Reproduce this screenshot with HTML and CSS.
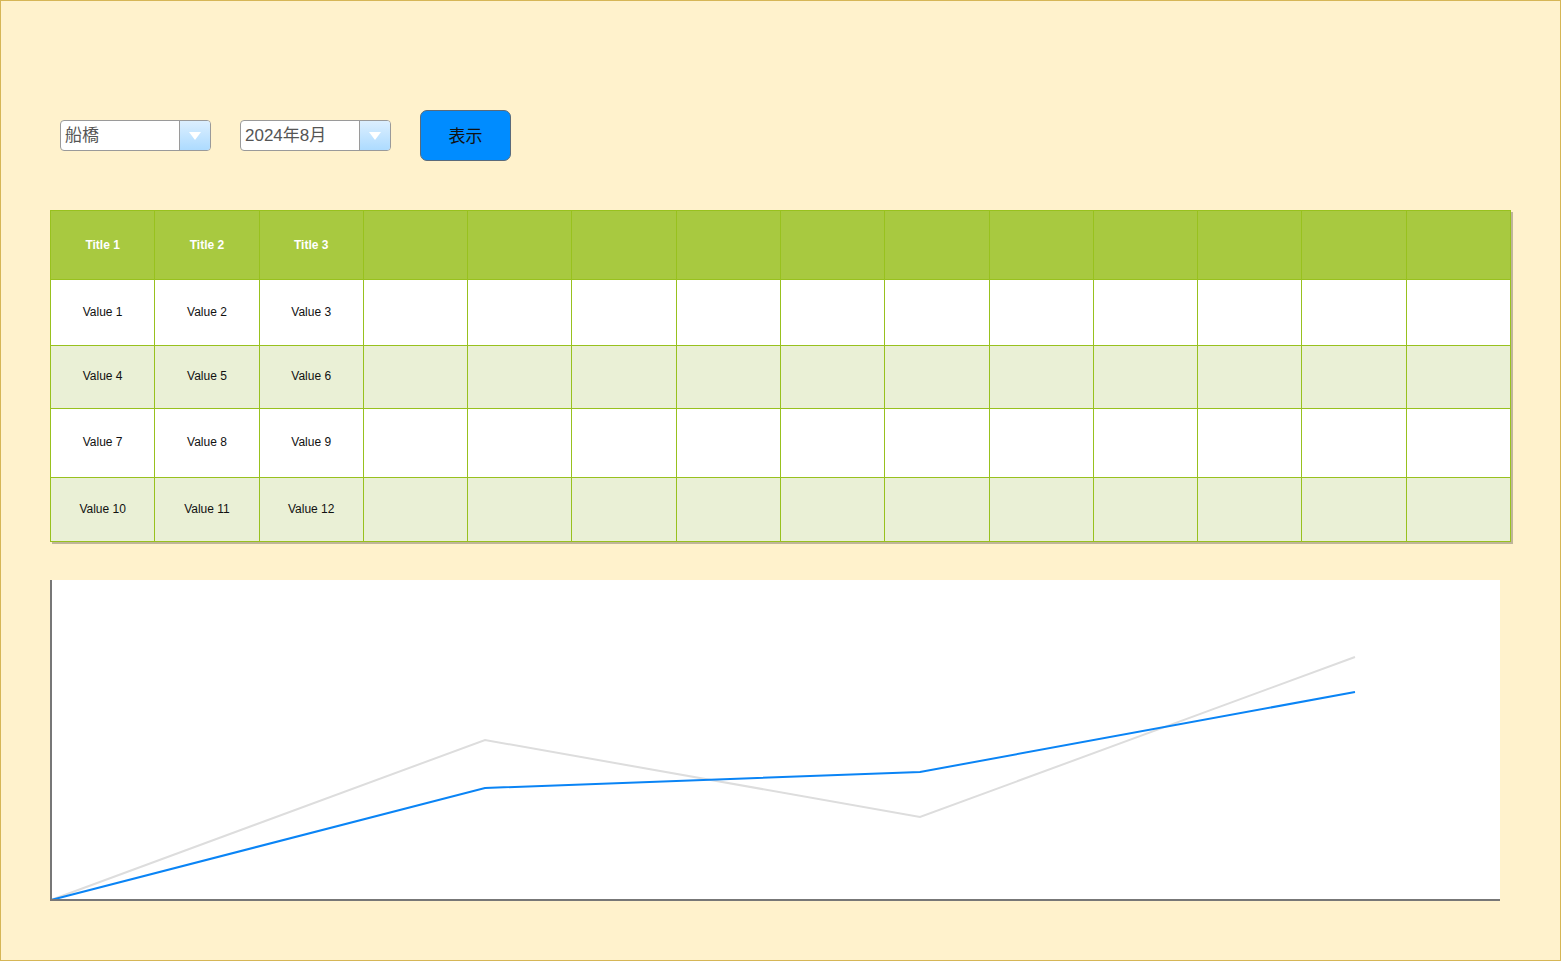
FILE: index.html
```html
<!DOCTYPE html>
<html lang="ja">
<head>
<meta charset="utf-8">
<link rel="stylesheet" href="styles.css">
</head>
<body>
<div class="frame">
  <div class="toolbar">
    <div class="select">
      <span class="select-text">船橋</span>
      <span class="select-btn"><svg width="14" height="10" viewBox="0 0 14 10"><path d="M1 1 L13 1 L7 9 Z" fill="#fff"/></svg></span>
    </div>
    <div class="select">
      <span class="select-text">2024年8月</span>
      <span class="select-btn"><svg width="14" height="10" viewBox="0 0 14 10"><path d="M1 1 L13 1 L7 9 Z" fill="#fff"/></svg></span>
    </div>
    <button class="show-btn">表示</button>
  </div>

  <table class="grid">
    <colgroup>
      <col><col><col><col><col><col><col><col><col><col><col><col><col><col>
    </colgroup>
    <tr class="head h0">
      <th>Title 1</th><th>Title 2</th><th>Title 3</th><th></th><th></th><th></th><th></th><th></th><th></th><th></th><th></th><th></th><th></th><th></th>
    </tr>
    <tr class="r1">
      <td>Value 1</td><td>Value 2</td><td>Value 3</td><td></td><td></td><td></td><td></td><td></td><td></td><td></td><td></td><td></td><td></td><td></td>
    </tr>
    <tr class="r2 alt">
      <td>Value 4</td><td>Value 5</td><td>Value 6</td><td></td><td></td><td></td><td></td><td></td><td></td><td></td><td></td><td></td><td></td><td></td>
    </tr>
    <tr class="r3">
      <td>Value 7</td><td>Value 8</td><td>Value 9</td><td></td><td></td><td></td><td></td><td></td><td></td><td></td><td></td><td></td><td></td><td></td>
    </tr>
    <tr class="r4 alt">
      <td>Value 10</td><td>Value 11</td><td>Value 12</td><td></td><td></td><td></td><td></td><td></td><td></td><td></td><td></td><td></td><td></td><td></td>
    </tr>
  </table>

  <div class="chart">
    <svg width="1450" height="321" viewBox="0 0 1450 321">
      <polyline points="1,320 435,160 870,237 1305,77" fill="none" stroke="#dddddd" stroke-width="2"/>
      <polyline points="1,320 435,208 870,192 1305,112" fill="none" stroke="#0a84f5" stroke-width="2"/>
      <line x1="1" y1="0" x2="1" y2="321" stroke="#777" stroke-width="2"/>
      <line x1="0" y1="320" x2="1450" y2="320" stroke="#777" stroke-width="2"/>
    </svg>
  </div>
</div>
</body>
</html>
```
FILE: styles.css
```css
html, body {
  margin: 0;
  padding: 0;
}
body {
  font-family: "Liberation Sans", "Noto Sans CJK JP", sans-serif;
}
.frame {
  box-sizing: border-box;
  width: 1561px;
  height: 961px;
  background: #fff2cc;
  border: 1px solid #d6b656;
  padding: 109px 0 0 49px;
  display: flex;
  flex-direction: column;
  align-items: flex-start;
}
.toolbar {
  display: flex;
  align-items: center;
  height: 51px;
  padding-left: 10px;
  gap: 30px;
}
.select {
  box-sizing: border-box;
  width: 151px;
  height: 31px;
  background: #fff;
  border: 1px solid #9a9a9a;
  border-radius: 4px;
  display: flex;
  overflow: hidden;
  margin-right: -1px;
}
.select-text {
  flex: 1;
  font-family: "Liberation Sans", "Noto Sans CJK JP", sans-serif;
  font-size: 17px;
  color: #555;
  line-height: 30px;
  padding-left: 4px;
}
.select-btn {
  width: 30px;
  border-left: 1px solid #9a9a9a;
  background: linear-gradient(#dcefff, #addbff);
  display: flex;
  align-items: center;
  justify-content: center;
}
.show-btn {
  box-sizing: border-box;
  width: 91px;
  height: 51px;
  margin-left: 0;
  background: #008cff;
  border: 1px solid #5a6a7a;
  border-radius: 7px;
  font-family: "Noto Sans CJK JP", sans-serif;
  font-size: 17px;
  color: #111;
  padding: 0 0 3px 0;
}
.grid {
  margin-top: 49px;
  width: 1461px;
  border-collapse: collapse;
  table-layout: fixed;
  box-shadow: 2px 2px 0 rgba(0, 0, 0, 0.25);
  font-size: 12px;
}
.grid th, .grid td {
  border: 1px solid #98c11e;
  text-align: center;
  padding: 0 0 2px 0;
  color: #111;
}
.grid th {
  background: #a8c940;
  color: #fff;
  font-weight: bold;
  padding: 0;
}
.grid td {
  background: #fff;
}
.grid .alt td {
  background: #eaf0d6;
}
.h0 { height: 69px; }
.r1 { height: 66px; }
.r2 { height: 63px; }
.r3 { height: 69px; }
.r4 { height: 64px; }
.chart {
  margin-top: 38px;
  width: 1450px;
  height: 321px;
  background: #fff;
}
.chart svg {
  display: block;
}
```
